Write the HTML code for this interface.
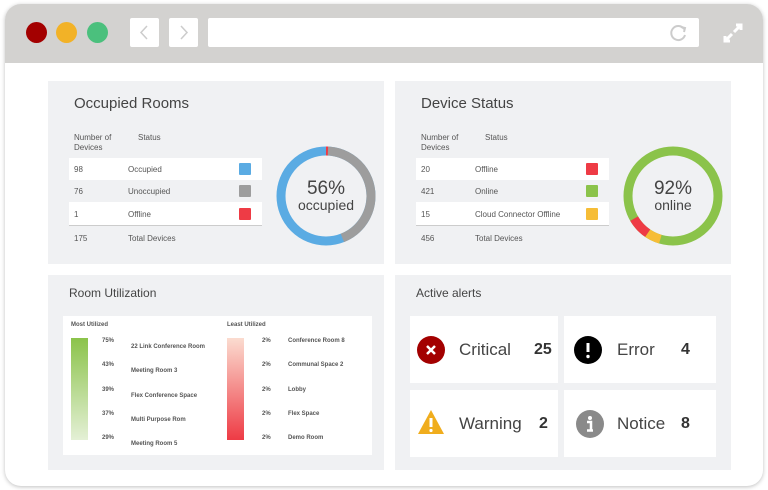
<!DOCTYPE html>
<html><head><meta charset="utf-8"><style>
*{margin:0;padding:0;box-sizing:border-box}
body{width:768px;height:490px;background:#fff;position:relative;overflow:hidden;font-family:"Liberation Sans",sans-serif;color:#444}
.win{position:absolute;left:5px;top:4px;width:758px;height:482px;border-radius:16px;background:#fff;box-shadow:0 1px 4px rgba(0,0,0,.25);overflow:hidden}
.bar{position:absolute;left:0;top:0;width:758px;height:59px;background:#d3d2d0}
.dot{position:absolute;top:18px;width:21px;height:21px;border-radius:50%}
.btn{position:absolute;top:14px;width:29px;height:29px;background:#fff;border-radius:2px}
.abs{position:absolute}
.panel{position:absolute;background:#f0f1f3}
h2{position:absolute;font-weight:normal;color:#444}
.t{position:absolute;font-size:8px;color:#555}
.row{position:absolute;left:21px;width:193px;height:22px}
.sq{position:absolute;width:12px;height:12px;border-radius:1px}
.card{position:absolute;background:#fff}
.lbl{position:absolute;font-size:17px;color:#444}
.num{position:absolute;font-size:16px;font-weight:bold;color:#333}
.s{position:absolute;font-size:6px;font-weight:bold;color:#555}
</style></head><body>
<div class="win">
<div class="bar">
<div class="dot" style="left:21px;background:#a30000"></div>
<div class="dot" style="left:51px;background:#f2b227"></div>
<div class="dot" style="left:82px;background:#4bc07d"></div>
<div class="btn" style="left:125px"><svg width="29" height="29"><path d="M17 8 L11 14.5 L17 21" stroke="#ccc" stroke-width="1.5" fill="none"/></svg></div>
<div class="btn" style="left:164px"><svg width="29" height="29"><path d="M12 8 L18 14.5 L12 21" stroke="#ccc" stroke-width="1.5" fill="none"/></svg></div>
<div class="btn" style="left:203px;width:491px"><svg class="abs" style="left:461px;top:5px" width="20" height="20"><path d="M15 6 A7 7 0 1 0 16 12" stroke="#ccc" stroke-width="2" fill="none"/><path d="M12 4 L16 5 L15 9" stroke="#ccc" stroke-width="2" fill="none"/></svg></div>
<svg class="abs" style="left:717px;top:18px" width="22" height="22"><path d="M12 10 L19 3 M14 3 H19 V8 M10 12 L3 19 M3 14 V19 H8" stroke="#fff" stroke-width="3" fill="none"/></svg>
</div>
</div>

<!-- Occupied Rooms -->
<div class="panel" style="left:48px;top:81px;width:336px;height:183px">
<h2 style="left:26px;top:14px;font-size:15px">Occupied Rooms</h2>
<div class="t" style="left:26px;top:52px;line-height:10px">Number of<br>Devices</div>
<div class="t" style="left:90px;top:52px">Status</div>
<div class="row" style="top:77px;background:#fff"></div>
<div class="row" style="top:121px;background:#fff;border-bottom:1px solid #ccc;height:24px"></div>
<div class="t" style="left:26px;top:84px">98</div><div class="t" style="left:80px;top:84px">Occupied</div><div class="sq" style="left:191px;top:82px;background:#5aabe3"></div>
<div class="t" style="left:26px;top:106px">76</div><div class="t" style="left:80px;top:106px">Unoccupied</div><div class="sq" style="left:191px;top:104px;background:#9d9d9d"></div>
<div class="t" style="left:26px;top:129px">1</div><div class="t" style="left:80px;top:129px">Offline</div><div class="sq" style="left:191px;top:127px;background:#ee3b45"></div>
<div class="t" style="left:26px;top:153px">175</div><div class="t" style="left:80px;top:153px">Total Devices</div>
<svg class="abs" style="left:228px;top:65px" width="100" height="100" viewBox="0 0 100 100">
<g transform="rotate(-90 50 50)">
<circle cx="50" cy="50" r="45" fill="none" stroke="#5aabe3" stroke-width="9"/>
<circle cx="50" cy="50" r="45" fill="none" stroke="#9d9d9d" stroke-width="9" stroke-dasharray="124.4 400"/>
<circle cx="50" cy="50" r="45" fill="none" stroke="#ee3b45" stroke-width="9" stroke-dasharray="2 400"/>
</g>
<text x="50" y="48" text-anchor="middle" font-size="19" fill="#444" font-family="Liberation Sans">56%</text>
<text x="50" y="64" text-anchor="middle" font-size="14" fill="#444" font-family="Liberation Sans">occupied</text>
</svg>
</div>

<!-- Device Status -->
<div class="panel" style="left:395px;top:81px;width:336px;height:183px">
<h2 style="left:26px;top:14px;font-size:15px">Device Status</h2>
<div class="t" style="left:26px;top:52px;line-height:10px">Number of<br>Devices</div>
<div class="t" style="left:90px;top:52px">Status</div>
<div class="row" style="top:77px;background:#fff"></div>
<div class="row" style="top:121px;background:#fff;border-bottom:1px solid #ccc;height:24px"></div>
<div class="t" style="left:26px;top:84px">20</div><div class="t" style="left:80px;top:84px">Offline</div><div class="sq" style="left:191px;top:82px;background:#ee3b45"></div>
<div class="t" style="left:26px;top:106px">421</div><div class="t" style="left:80px;top:106px">Online</div><div class="sq" style="left:191px;top:104px;background:#8bc34a"></div>
<div class="t" style="left:26px;top:129px">15</div><div class="t" style="left:80px;top:129px">Cloud Connector Offline</div><div class="sq" style="left:191px;top:127px;background:#f6bd37"></div>
<div class="t" style="left:26px;top:153px">456</div><div class="t" style="left:80px;top:153px">Total Devices</div>
<svg class="abs" style="left:228px;top:65px" width="100" height="100" viewBox="0 0 100 100">
<g transform="rotate(-90 50 50)">
<circle cx="50" cy="50" r="45" fill="none" stroke="#8bc34a" stroke-width="9"/>
<circle cx="50" cy="50" r="45" fill="none" stroke="#f6bd37" stroke-width="9" stroke-dasharray="0 154 14 400"/>
<circle cx="50" cy="50" r="45" fill="none" stroke="#ee3b45" stroke-width="9" stroke-dasharray="0 168 20 400"/>
</g>
<text x="50" y="48" text-anchor="middle" font-size="19" fill="#444" font-family="Liberation Sans">92%</text>
<text x="50" y="64" text-anchor="middle" font-size="14" fill="#444" font-family="Liberation Sans">online</text>
</svg>
</div>

<!-- Room Utilization -->
<div class="panel" style="left:48px;top:275px;width:336px;height:195px">
<h2 style="left:21px;top:11px;font-size:12px">Room Utilization</h2>
<div class="card" style="left:15px;top:41px;width:309px;height:139px">
<div class="s" style="left:8px;top:6px">Most Utilized</div>
<div class="abs" style="left:8px;top:22px;width:17px;height:102px;background:linear-gradient(#8bc34a,#e4f0d6)"></div>
<div class="s" style="left:39px;top:22px">75%</div><div class="s" style="left:68px;top:28px">22 Link Conference Room</div>
<div class="s" style="left:39px;top:46px">43%</div><div class="s" style="left:68px;top:52px">Meeting Room 3</div>
<div class="s" style="left:39px;top:71px">39%</div><div class="s" style="left:68px;top:77px">Flex Conference Space</div>
<div class="s" style="left:39px;top:95px">37%</div><div class="s" style="left:68px;top:101px">Multi Purpose Rom</div>
<div class="s" style="left:39px;top:119px">29%</div><div class="s" style="left:68px;top:125px">Meeting Room 5</div>
<div class="s" style="left:164px;top:6px">Least Utilized</div>
<div class="abs" style="left:164px;top:22px;width:17px;height:102px;background:linear-gradient(#fbdcd0,#ee3b45)"></div>
<div class="s" style="left:199px;top:22px">2%</div><div class="s" style="left:225px;top:22px">Conference Room 8</div>
<div class="s" style="left:199px;top:46px">2%</div><div class="s" style="left:225px;top:46px">Communal Space 2</div>
<div class="s" style="left:199px;top:71px">2%</div><div class="s" style="left:225px;top:71px">Lobby</div>
<div class="s" style="left:199px;top:95px">2%</div><div class="s" style="left:225px;top:95px">Flex Space</div>
<div class="s" style="left:199px;top:119px">2%</div><div class="s" style="left:225px;top:119px">Demo Room</div>
</div>
</div>

<!-- Active alerts -->
<div class="panel" style="left:395px;top:275px;width:336px;height:195px">
<h2 style="left:21px;top:11px;font-size:12px">Active alerts</h2>
<div class="card" style="left:15px;top:41px;width:148px;height:67px">
<svg class="abs" style="left:7px;top:20px" width="28" height="28"><circle cx="14" cy="14" r="14" fill="#a30000"/><path d="M10 10 L18 18 M18 10 L10 18" stroke="#fff" stroke-width="2.5"/></svg>
<div class="lbl" style="left:49px;top:24px">Critical</div><div class="num" style="left:124px;top:25px">25</div>
</div>
<div class="card" style="left:169px;top:41px;width:152px;height:67px">
<svg class="abs" style="left:10px;top:20px" width="28" height="28"><circle cx="14" cy="14" r="14" fill="#000"/><path d="M14 7 V16" stroke="#fff" stroke-width="3"/><circle cx="14" cy="20.5" r="1.7" fill="#fff"/></svg>
<div class="lbl" style="left:53px;top:24px">Error</div><div class="num" style="left:117px;top:25px">4</div>
</div>
<div class="card" style="left:15px;top:115px;width:148px;height:67px">
<svg class="abs" style="left:7px;top:19px" width="28" height="26"><path d="M14 1 L27 25 H1 Z" fill="#f0ad1d"/><path d="M14 9 V18" stroke="#fff" stroke-width="3"/><circle cx="14" cy="21.5" r="1.6" fill="#fff"/></svg>
<div class="lbl" style="left:49px;top:24px">Warning</div><div class="num" style="left:129px;top:25px">2</div>
</div>
<div class="card" style="left:169px;top:115px;width:152px;height:67px">
<svg class="abs" style="left:12px;top:20px" width="28" height="28"><circle cx="14" cy="14" r="14" fill="#8a8a8a"/><circle cx="14" cy="8" r="2" fill="#fff"/><path d="M11 12 H15 V20 M11 20.5 H17" stroke="#fff" stroke-width="2.5" fill="none"/></svg>
<div class="lbl" style="left:53px;top:24px">Notice</div><div class="num" style="left:117px;top:25px">8</div>
</div>
</div>
</body></html>
